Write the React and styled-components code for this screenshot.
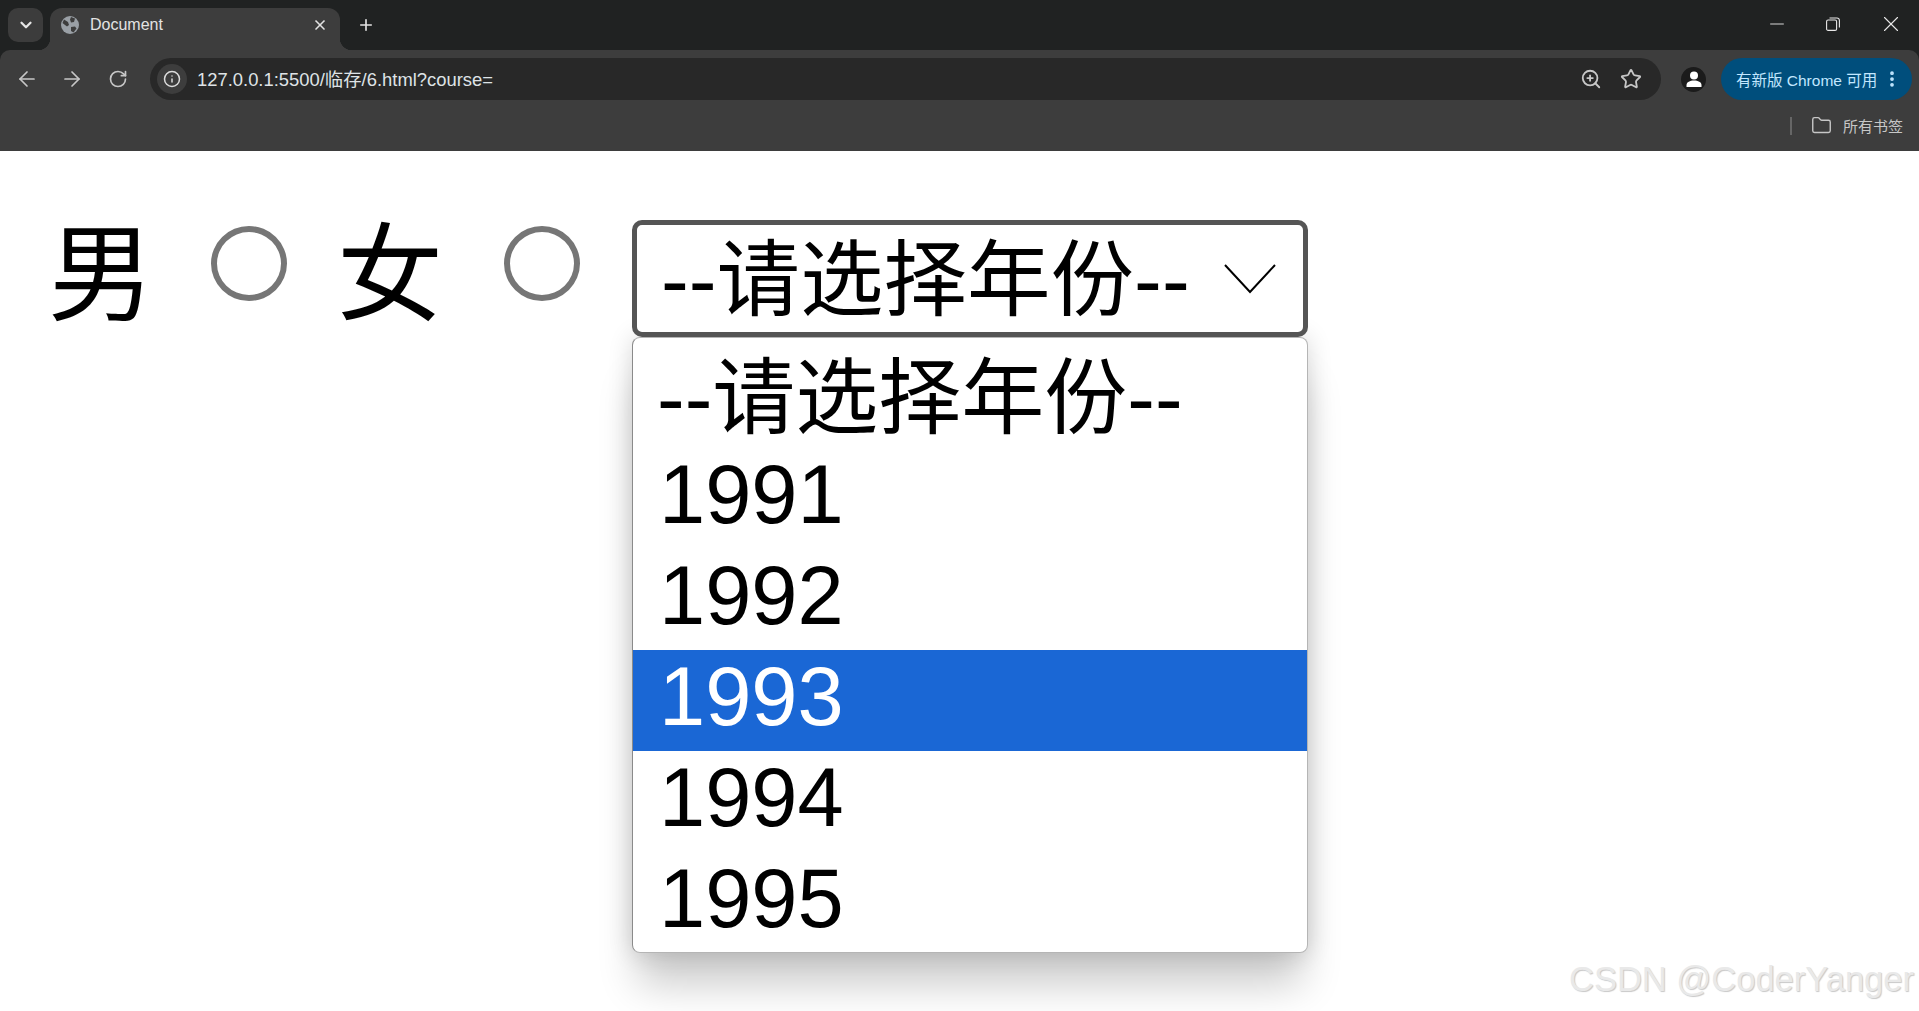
import React from "react";
import styled, { createGlobalStyle } from "styled-components";
import { ArrowLeft, ArrowRight, RotateCw, Info, ZoomIn, Star, Folder, X, Plus, ChevronDown, Minus, EllipsisVertical } from "lucide-react";

const GlobalStyle = createGlobalStyle`
  html, body {
    margin: 0;
    height: 100%;
    overflow: hidden;
    background: #fff;
  }
  * { box-sizing: border-box; }
`;

const chromeFont = `"Liberation Sans", "Noto Sans CJK SC", sans-serif`;
const pageFont = `"Liberation Sans", "Noto Sans CJK SC", sans-serif`;

const Browser = styled.div`
  background: #202222;
  height: 151px;
  font-family: ${chromeFont};
`;

const TabStrip = styled.div`
  height: 50px;
  display: flex;
  align-items: flex-start;
  padding: 8px 15px 0 8px;
`;

const TabListButton = styled.div`
  width: 35px;
  height: 34px;
  background: #3c3c3c;
  border-radius: 10px;
  color: #e6e6e6;
  display: flex;
  align-items: center;
  justify-content: center;
  margin-right: 7px;
`;

const Tab = styled.div`
  position: relative;
  width: 290px;
  height: 42px;
  background: #3d3d3d;
  border-radius: 12px 12px 0 0;
  display: flex;
  align-items: center;
  padding: 0 12px 8px 11px;
  color: #e3e3e3;
  font-size: 16px;

  &::before,
  &::after {
    content: "";
    position: absolute;
    bottom: 0;
    width: 12px;
    height: 12px;
  }
  &::before {
    left: -12px;
    background: radial-gradient(circle at 0 0, transparent 12px, #3d3d3d 12.5px);
  }
  &::after {
    right: -12px;
    background: radial-gradient(circle at 100% 0, transparent 12px, #3d3d3d 12.5px);
  }
`;

const TabTitle = styled.span`
  flex: 1;
  margin-left: 11px;
`;

const NewTab = styled.div`
  margin-left: 17px;
  height: 34px;
  display: flex;
  align-items: center;
  color: #e3e3e3;
`;

const WindowControls = styled.div`
  margin-left: auto;
  height: 32px;
  display: flex;
  align-items: center;
  gap: 38px;
  color: #e8e8e8;
`;

const Toolbar = styled.div`
  height: 101px;
  background: #3d3d3d;
  border-radius: 10px 10px 0 0;
  padding: 8px 7px 0 15px;
`;

const NavRow = styled.div`
  height: 42px;
  display: flex;
  align-items: center;
`;

const NavIcons = styled.div`
  display: flex;
  align-items: center;
  gap: 21px;
  color: #c7c7c7;
  width: 135px;
`;

const ReloadIcon = styled(RotateCw)`
  margin-left: 3px;
`;

const Omnibox = styled.div`
  width: 1511px;
  height: 42px;
  background: #282828;
  border-radius: 21px;
  display: flex;
  align-items: center;
  padding: 0 19px 0 7px;
`;

const SiteInfo = styled.div`
  width: 30px;
  height: 30px;
  border-radius: 50%;
  background: #3d3d3d;
  color: #dcdcdc;
  display: flex;
  align-items: center;
  justify-content: center;
`;

const Url = styled.span`
  margin-left: 10px;
  margin-bottom: 2px;
  flex: 1;
  color: #dfe3e6;
  font-size: 18.4px;
`;

const OmniIcons = styled.div`
  display: flex;
  align-items: center;
  gap: 18px;
  color: #c7c7c7;
`;

const Avatar = styled.div`
  width: 25px;
  height: 25px;
  border-radius: 50%;
  background: #1b1b1b;
  margin: 0 15px 0 20px;
  display: flex;
  align-items: center;
  justify-content: center;
`;

const UpdateBadge = styled.div`
  width: 191px;
  height: 42px;
  border-radius: 21px;
  background: #004e7c;
  color: #c2e7ff;
  font-size: 15.5px;
  display: flex;
  align-items: center;
  justify-content: space-between;
  padding: 0 10px 0 15px;
`;

const BookmarkRow = styled.div`
  height: 51px;
  display: flex;
  align-items: center;
  justify-content: flex-end;
  padding-right: 9px;
  color: #c7c7c7;
  font-size: 15px;
`;

const Separator = styled.div`
  width: 2px;
  height: 18px;
  background: #666;
  margin-right: 19px;
`;

const BookmarkLabel = styled.span`
  margin-left: 11px;
`;

const Content = styled.main`
  position: relative;
  height: 860px;
  background: #fff;
  display: flex;
  align-items: flex-start;
  gap: 50px;
  padding: 69px 0 0 48px;
  font-family: ${pageFont};
  color: #000;
`;

const Choice = styled.div`
  display: flex;
  align-items: flex-start;
  gap: ${(p) => p.$gap}px;
`;

const ChoiceLabel = styled.span`
  font-size: 106px;
  line-height: 100px;
  width: 106px;
  margin-top: 5px;
`;

const Radio = styled.input.attrs({ type: "radio", readOnly: true })`
  appearance: none;
  width: 76px;
  height: 75px;
  margin: 6px 0 0;
  border: 6px solid #767676;
  border-radius: 50%;
  background: #fff;
`;

const SelectWrap = styled.div`
  position: relative;
  width: 676px;
  margin-left: 2px;
`;

const SelectBox = styled.div`
  position: relative;
  z-index: 1;
  height: 117px;
  border: 5px solid #555;
  border-radius: 10px;
  background: #fff;
  display: flex;
  align-items: center;
  justify-content: space-between;
  padding: 3px 27px 0 24px;
  font-size: 83.5px;
  line-height: 106px;
  white-space: nowrap;
`;

const Chevron = styled.svg`
  margin-bottom: 2px;
`;

const Dropdown = styled.ul`
  position: absolute;
  top: 117px;
  left: 0;
  right: 0;
  margin: 0;
  padding: 0;
  list-style: none;
  height: 616px;
  background: #fff;
  border: 1px solid #b5b5b5;
  border-left-color: #8a8a8a;
  border-radius: 8px;
  overflow: hidden;
  box-shadow: 0 38px 40px -6px rgba(0, 0, 0, 0.2), 0 0 24px rgba(0, 0, 0, 0.16);
`;

const Option = styled.li`
  height: ${(p) => (p.$first ? "110px" : "101px")};
  line-height: ${(p) => (p.$first ? "122px" : "94px")};
  padding-left: ${(p) => (p.$first ? "24px" : "26px")};
  font-size: 83px;
  white-space: nowrap;
  background: ${(p) => (p.$active ? "#1a67d5" : "transparent")};
  color: ${(p) => (p.$active ? "#fff" : "#000")};
`;

const Watermark = styled.div`
  position: absolute;
  right: 5px;
  bottom: 10px;
  font-family: "Liberation Sans", sans-serif;
  font-size: 34.5px;
  line-height: 44px;
  color: #e9e9e9;
  text-shadow: 1px 1px 1px #c8c8c8;
  white-space: nowrap;
`;

const years = ["--请选择年份--", "1991", "1992", "1993", "1994", "1995"];

function GlobeIcon() {
  return (
    <svg width="18" height="18" viewBox="0 0 18 18">
      <circle cx="9" cy="9" r="9" fill="#9aa0a6" />
      <path d="M3 3.5 7 6l1 3-2 1.5L4 9 1.5 7zM10 1l4 1.5-1 3.5-3 .5-1-3zM10 11l4-.5 1.5 2-3 4-2.500-1.500z" fill="#3d3d3d" />
    </svg>
  );
}

function PersonIcon() {
  return (
    <svg width="18" height="18" viewBox="0 0 18 18" fill="#fff">
      <circle cx="9" cy="5.500" r="4" />
      <path d="M1.500 17v-2c0-3 3.500-4.500 7.500-4.500s7.500 1.500 7.500 4.500v2z" />
    </svg>
  );
}

function RestoreIcon() {
  return (
    <svg width="14" height="14" viewBox="0 0 14 14" fill="none" stroke="currentColor" strokeWidth="1.100">
      <rect x="0.600" y="3" width="10" height="10.400" rx="1.500" />
      <path d="M3.500 1h7.500a2.400 2.400 0 0 1 2.400 2.400v7.100" />
    </svg>
  );
}

export default function App() {
  return (
    <>
      <GlobalStyle />
      <Browser>
        <TabStrip>
          <TabListButton>
            <ChevronDown size={18} strokeWidth={3} />
          </TabListButton>
          <Tab>
            <GlobeIcon />
            <TabTitle>Document</TabTitle>
            <X size={16} strokeWidth={2.500} />
          </Tab>
          <NewTab>
            <Plus size={18} strokeWidth={2.200} />
          </NewTab>
          <WindowControls>
            <Minus size={22} strokeWidth={1} />
            <RestoreIcon />
            <X size={26} strokeWidth={1} />
          </WindowControls>
        </TabStrip>
        <Toolbar>
          <NavRow>
            <NavIcons>
              <ArrowLeft size={24} strokeWidth={1.700} />
              <ArrowRight size={24} strokeWidth={1.700} />
              <ReloadIcon size={20} strokeWidth={2} />
            </NavIcons>
            <Omnibox>
              <SiteInfo>
                <Info size={18} strokeWidth={2} />
              </SiteInfo>
              <Url>127.0.0.1:5500/临存/6.html?course=</Url>
              <OmniIcons>
                <ZoomIn size={22} strokeWidth={2} />
                <Star size={22} strokeWidth={2} />
              </OmniIcons>
            </Omnibox>
            <Avatar>
              <PersonIcon />
            </Avatar>
            <UpdateBadge>
              有新版 Chrome 可用
              <EllipsisVertical size={20} strokeWidth={2.500} color="#c2e7ff" />
            </UpdateBadge>
          </NavRow>
          <BookmarkRow>
            <Separator />
            <Folder size={21} strokeWidth={1.600} />
            <BookmarkLabel>所有书签</BookmarkLabel>
          </BookmarkRow>
        </Toolbar>
      </Browser>
      <Content>
        <Choice $gap={57}>
          <ChoiceLabel>男</ChoiceLabel>
          <Radio />
        </Choice>
        <Choice $gap={61}>
          <ChoiceLabel>女</ChoiceLabel>
          <Radio />
        </Choice>
        <SelectWrap>
          <SelectBox>
            {years[0]}
            <Chevron width="52" height="30" viewBox="0 0 52 30" fill="none" stroke="#000" strokeWidth="2">
              <path d="M1 1l25 27L51 1" />
            </Chevron>
          </SelectBox>
          <Dropdown>
            {years.map((year, i) => (
              <Option key={year} $first={i === 0} $active={year === "1993"}>
                {year}
              </Option>
            ))}
          </Dropdown>
        </SelectWrap>
        <Watermark>CSDN @CoderYanger</Watermark>
      </Content>
    </>
  );
}
